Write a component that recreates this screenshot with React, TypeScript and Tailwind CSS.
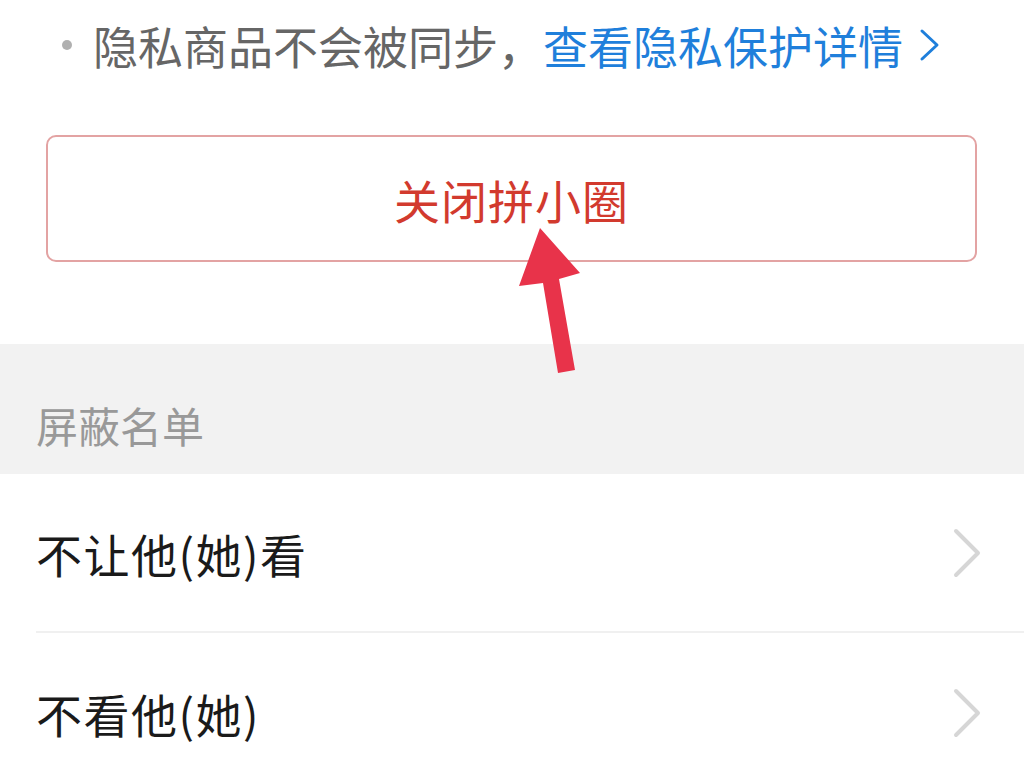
const font = { fontFamily: '"Noto Sans CJK SC", "Noto Sans", sans-serif' };

function Row({ label, divider }: { label: string; divider?: boolean }) {
  return (
    <div className="pl-[36px]">
      <div
        className={
          "flex h-[159px] items-center justify-between pr-[42px] " +
          (divider ? "border-b-2 border-[#f0f0f0]" : "")
        }
      >
        <span className="text-[46px] leading-none tracking-[1.5px] text-[#1a1a1a]">{label}</span>
        <svg width="30" height="52" viewBox="0 0 30 52" fill="none">
          <path d="M4 4 L26 26 L4 48" stroke="#d6d6d6" strokeWidth="4" strokeLinecap="round" strokeLinejoin="round" />
        </svg>
      </div>
    </div>
  );
}

export default function App() {
  return (
    <div className="relative h-[768px] w-[1024px] overflow-hidden bg-white" style={font}>
      <div className="flex h-[90px] items-center pl-[62px]">
        <span className="mr-[21px] h-[10px] w-[10px] rounded-full bg-[#b0b0b0]" />
        <span className="text-[45px] leading-none text-[#666666]">隐私商品不会被同步，</span>
        <span className="text-[45px] leading-none text-[#1f7fdb]">查看隐私保护详情</span>
        <svg className="ml-[16px]" width="22" height="34" viewBox="0 0 22 34" fill="none">
          <path d="M3 3 L18 17 L3 31" stroke="#1f7fdb" strokeWidth="3" strokeLinecap="round" strokeLinejoin="round" />
        </svg>
      </div>

      <div className="mt-[45px] pl-[46px] pr-[47px]">
        <button className="flex h-[127px] w-full items-center justify-center rounded-[10px] border-2 border-[#e3a3a3] bg-white">
          <span className="text-[46px] leading-none tracking-[1px] text-[#d23a2e]">关闭拼小圈</span>
        </button>
      </div>

      <div className="mt-[82px] flex h-[130px] items-end bg-[#f2f2f2] pb-[28px] pl-[36px]">
        <span className="text-[42px] leading-none text-[#999999]">屏蔽名单</span>
      </div>

      <Row label="不让他(她)看" divider />
      <Row label="不看他(她)" />

      <svg className="absolute left-0 top-0" width="1024" height="768" viewBox="0 0 1024 768">
        <polygon
          points="540,228 580,273 559,279 575,370 558,373 543,283 519,286"
          fill="#e8334a"
        />
      </svg>
    </div>
  );
}
